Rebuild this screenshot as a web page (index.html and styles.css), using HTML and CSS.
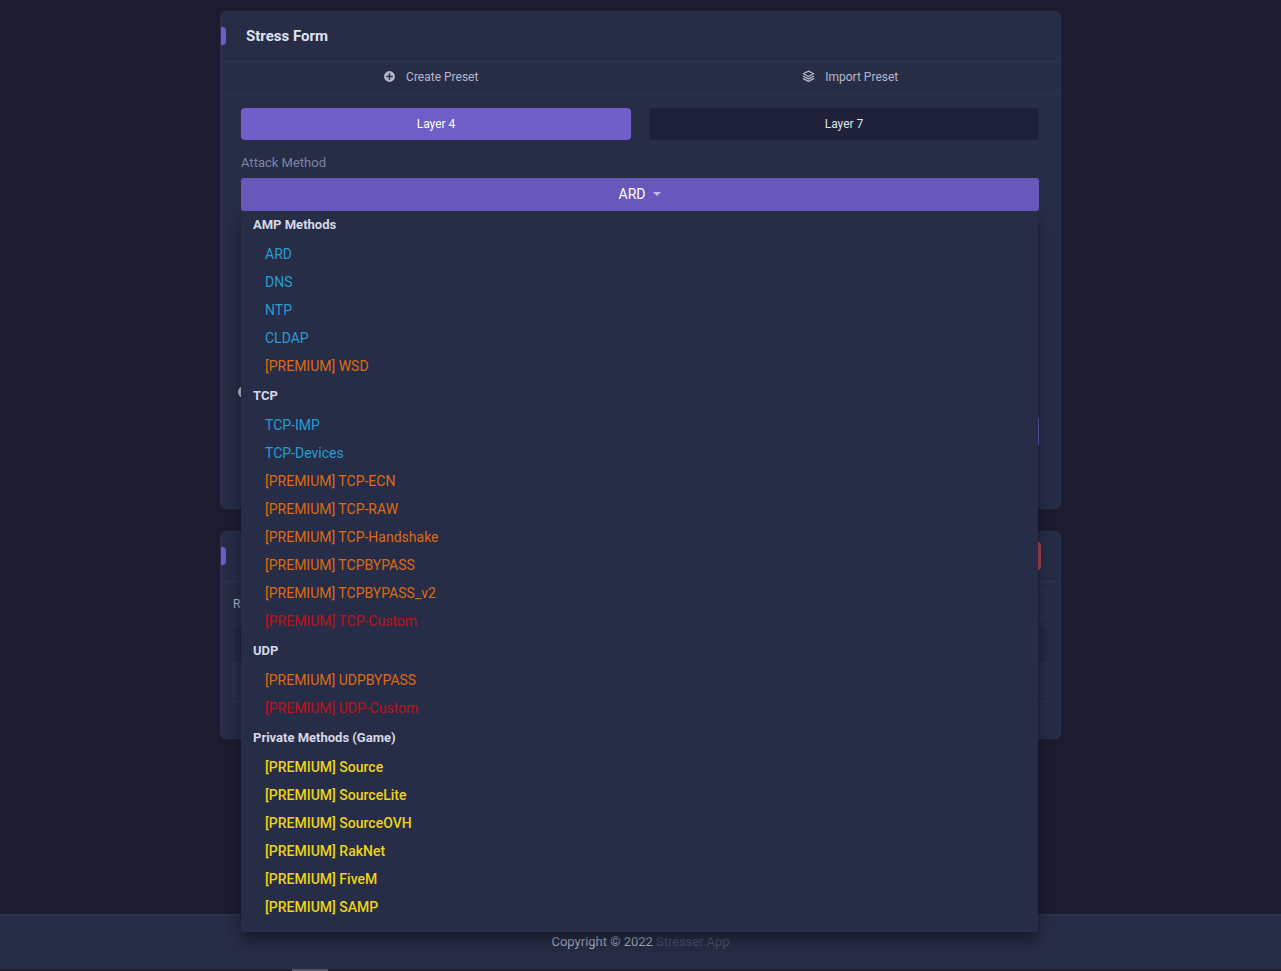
FILE: index.html
```html
<!DOCTYPE html>
<html lang="en">
<head>
<meta charset="utf-8">
<meta name="viewport" content="width=device-width, initial-scale=1">
<title>Stress Form</title>
<link rel="stylesheet" href="styles.css">
</head>
<body>
<main class="content">
  <section class="card card-form">
    <header class="card-header"><h1 class="card-title">Stress Form</h1></header>
    <nav class="presets">
      <a class="preset" href="#create">
        <svg class="icon" viewBox="0 0 24 24" aria-hidden="true"><path fill="currentColor" d="M12 2a10 10 0 1 0 0 20 10 10 0 0 0 0-20zm6 11.400h-4.600V18h-2.800v-4.600H6v-2.800h4.600V6h2.800v4.600H18z"/></svg>
        Create Preset
      </a>
      <a class="preset" href="#import">
        <svg class="icon" viewBox="0 0 24 24" aria-hidden="true"><g fill="none" stroke="currentColor" stroke-width="2.400" stroke-linejoin="round" stroke-linecap="round"><path d="M12 2 21.500 7 12 12 2.500 7z"/><path d="m2.500 11.500 9.500 5 9.500-5"/><path d="m2.500 16 9.500 5 9.500-5"/></g></svg>
        Import Preset
      </a>
    </nav>
    <div class="form">
      <div class="layers">
        <button class="layer layer-active" type="button">Layer 4</button>
        <button class="layer" type="button">Layer 7</button>
      </div>
      <span class="label" id="method-label">Attack Method</span>
      <div class="select">
        <button class="select-toggle" type="button" aria-haspopup="listbox" aria-expanded="true" aria-labelledby="method-label method-value"><span id="method-value">ARD</span><span class="caret"></span></button>
        <div class="menu" role="listbox" aria-labelledby="method-label">
          <div class="group" role="group" aria-label="AMP Methods">
            <h2 class="group-title">AMP Methods</h2>
            <button class="option" type="button" role="option">ARD</button>
            <button class="option" type="button" role="option">DNS</button>
            <button class="option" type="button" role="option">NTP</button>
            <button class="option" type="button" role="option">CLDAP</button>
            <button class="option premium" type="button" role="option">[PREMIUM] WSD</button>
          </div>
          <div class="group" role="group" aria-label="TCP">
            <h2 class="group-title">TCP</h2>
            <button class="option" type="button" role="option">TCP-IMP</button>
            <button class="option" type="button" role="option">TCP-Devices</button>
            <button class="option premium" type="button" role="option">[PREMIUM] TCP-ECN</button>
            <button class="option premium" type="button" role="option">[PREMIUM] TCP-RAW</button>
            <button class="option premium" type="button" role="option">[PREMIUM] TCP-Handshake</button>
            <button class="option premium" type="button" role="option">[PREMIUM] TCPBYPASS</button>
            <button class="option premium" type="button" role="option">[PREMIUM] TCPBYPASS_v2</button>
            <button class="option custom" type="button" role="option">[PREMIUM] TCP-Custom</button>
          </div>
          <div class="group" role="group" aria-label="UDP">
            <h2 class="group-title">UDP</h2>
            <button class="option premium" type="button" role="option">[PREMIUM] UDPBYPASS</button>
            <button class="option custom" type="button" role="option">[PREMIUM] UDP-Custom</button>
          </div>
          <div class="group" role="group" aria-label="Private Methods (Game)">
            <h2 class="group-title">Private Methods (Game)</h2>
            <button class="option private" type="button" role="option">[PREMIUM] Source</button>
            <button class="option private" type="button" role="option">[PREMIUM] SourceLite</button>
            <button class="option private" type="button" role="option">[PREMIUM] SourceOVH</button>
            <button class="option private" type="button" role="option">[PREMIUM] RakNet</button>
            <button class="option private" type="button" role="option">[PREMIUM] FiveM</button>
            <button class="option private" type="button" role="option">[PREMIUM] SAMP</button>
          </div>
        </div>
      </div>
      <div class="fields">
        <input class="field" type="text" aria-label="Host">
        <input class="field" type="text" aria-label="Port">
      </div>
      <input class="radio" type="radio" aria-label="Mode">
      <button class="submit" type="button" aria-label="Submit"></button>
    </div>
  </section>

  <section class="card card-list">
    <header class="card-header card-header-actions"><button class="stop" type="button" aria-label="Stop"></button></header>
    <div class="list">
      <div class="list-tools"><label for="search">Re</label><input class="search" id="search" type="text"></div>
      <div class="list-head"></div>
      <div class="list-body"></div>
    </div>
  </section>
</main>
<footer class="footer">Copyright © 2022 <a class="brand" href="#home">Stresser.App</a></footer>
<div class="scrollbar"><div class="scrollbar-thumb"></div></div>
</body>
</html>
```
FILE: styles.css
```css
* { box-sizing: border-box; }

body {
  margin: 0;
  min-height: 100vh;
  display: flex;
  flex-direction: column;
  background: #1b1c30;
  color: #b4b8cb;
  font-family: Roboto, "Liberation Sans", sans-serif;
  font-size: 12px;
}

button { border: 0; padding: 0; font: inherit; cursor: pointer; }
a { color: inherit; text-decoration: none; }

.content {
  flex: 1;
  width: 100%;
  max-width: 841px;
  margin: 0 auto;
  padding-top: 11px;
  display: flex;
  flex-direction: column;
  gap: 22px;
}

.card {
  border: 1px solid #2a3049;
  border-radius: 6px;
  background: #282d47;
}
.card-form { min-height: 498px; }
.card-list { min-height: 208px; }

.card-header {
  height: 50px;
  padding-bottom: 2px;
  display: flex;
  align-items: center;
  border-bottom: 1px solid #30354f;
}
.card-header::before {
  content: "";
  width: 5px;
  height: 18px;
  margin-right: 20px;
  border-radius: 0 4px 4px 0;
  background: #705ec8;
}
.card-header-actions { justify-content: space-between; padding-right: 19px; }
.card-title { margin: 0; color: #dfe1ee; font-size: 15px; font-weight: 700; }

.presets {
  height: 33px;
  display: grid;
  grid-template-columns: 1fr 1fr;
  border-bottom: 1px solid #30354f;
}
.preset { display: flex; align-items: center; justify-content: center; gap: 10px; padding-bottom: 3px; }
.icon { width: 13px; height: 13px; }

.form { padding: 13px 21px 21px 20px; display: flex; flex-direction: column; }
.layers { display: grid; grid-template-columns: 1fr 1fr; gap: 18px; }
.layer { height: 32px; border-radius: 4px; background: #1f213b; color: #dfe1ee; }
.layer-active { background: #705ec8; color: #fff; }
.label { padding: 13px 0 5px; line-height: 20px; color: #7e84a3; font-size: 13px; }

.select { position: relative; }
.select-toggle {
  position: relative;
  z-index: 3;
  width: 100%;
  height: 33px;
  padding-bottom: 1px;
  display: flex;
  align-items: center;
  justify-content: center;
  gap: 8px;
  border-radius: 3px;
  background: #6958bb;
  color: #fff;
  font-size: 14px;
}
.caret { border: 4px solid transparent; border-top-color: #c4bce6; border-bottom: 0; }

.menu {
  position: absolute;
  z-index: 2;
  top: 100%;
  left: 0;
  right: 1px;
  padding: 1px 0 11px;
  display: flex;
  flex-direction: column;
  gap: 3px;
  border-radius: 0 0 3px 3px;
  background: #282d47;
  box-shadow: 0 8px 16px #0d0f1ba0;
}
.group { display: flex; flex-direction: column; }
.group-title { margin: 0; padding: 0 12px 2px; color: #d5d8e6; font-size: 13px; font-weight: 700; line-height: 26px; }
.option { padding: 0 24px; background: none; color: #279cd2; font-size: 14px; line-height: 28px; text-align: left; }
.premium { color: #dc6b12; }
.custom { color: #c01018; }
.private { color: #ecd416; font-weight: 500; }

.fields { padding-top: 42px; display: flex; flex-direction: column; gap: 31px; }
.field { width: 100%; height: 28px; border: 1px solid #30354f; border-radius: 3px; background: none; }
.radio { width: 12px; height: 12px; margin: 46px -3px 18px; appearance: none; border-radius: 50%; background: #d0d3dc; }
.submit { height: 31px; border: 1px solid #705ec8; border-radius: 3px; background: none; }
.stop { width: 60px; height: 28px; border-radius: 4px; background: #b94a4d; }

.list { padding: 8px 13px 36px 12px; }
.list-tools { display: flex; align-items: center; justify-content: space-between; padding-bottom: 9px; }
.search { width: 160px; height: 28px; border: 1px solid #30354f; border-radius: 3px; background: none; }
.list-head { height: 35px; background: #25294a; }
.list-body { height: 40px; border: 1px solid #30354f; }

.footer {
  height: 55px;
  padding-bottom: 2px;
  display: flex;
  align-items: center;
  justify-content: center;
  gap: 3px;
  border-top: 1px solid #30354f;
  background: #282d47;
  font-size: 13px;
}
.brand { color: #4f546d; }
.scrollbar { height: 2px; padding-left: 292px; background: #202126; }
.scrollbar-thumb { width: 36px; height: 2px; background: #55565d; }
```
